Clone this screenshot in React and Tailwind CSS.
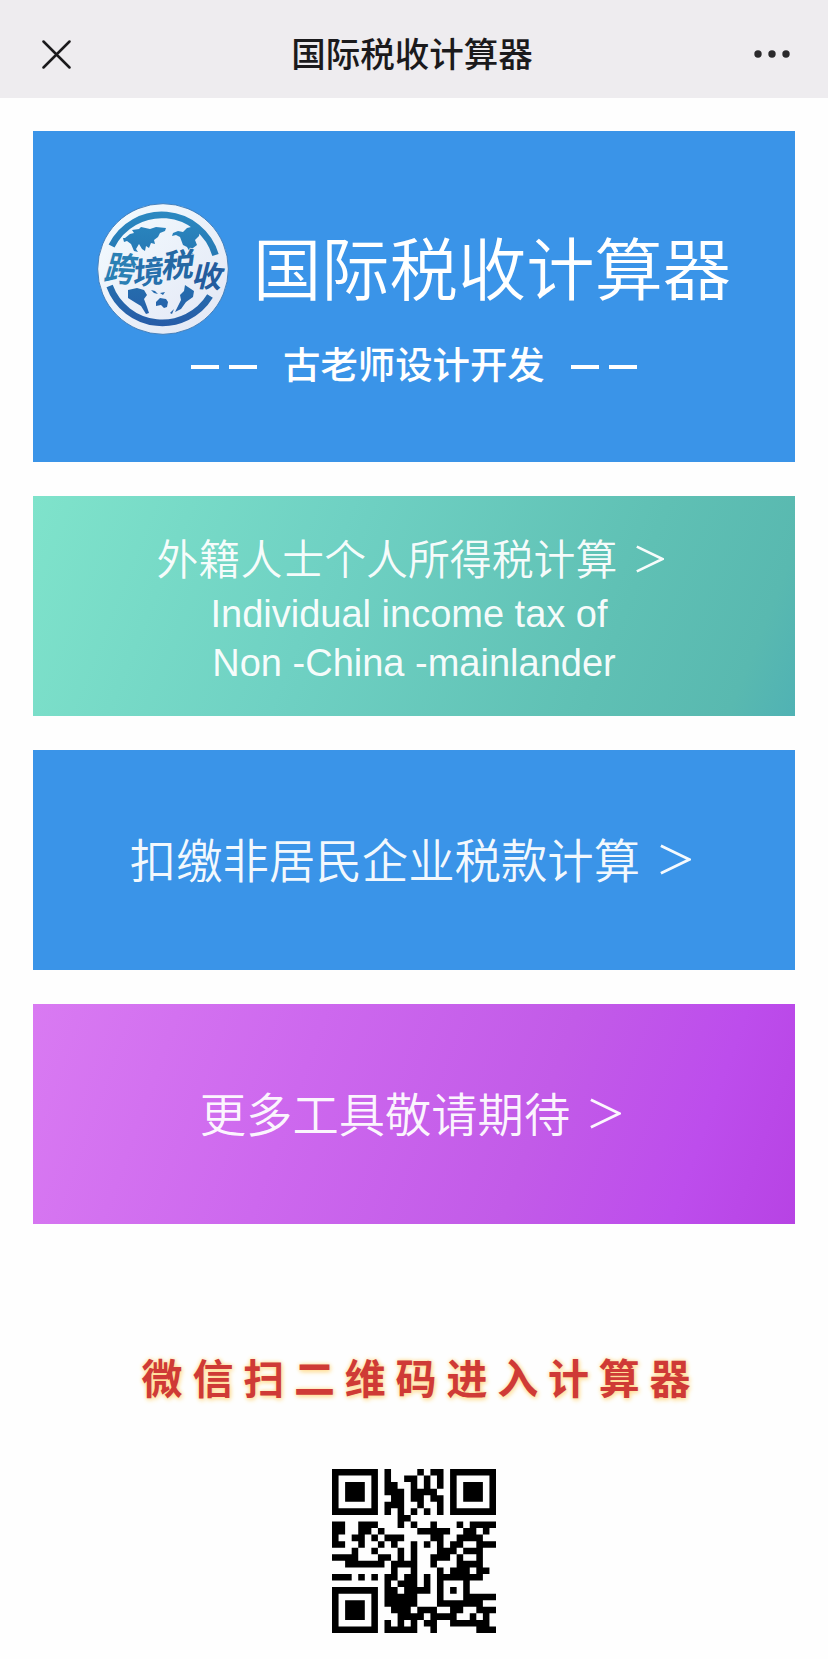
import React from 'react';

const tools = [
  {
    title: '外籍人士个人所得税计算',
    lines: ['Individual income tax of', 'Non -China -mainlander'],
    box: 'bg-linear-[112deg,#7fe3cb_0%,#6fd1c3_38%,#5fc0b4_75%,#59b9b0_92%,#50b2b4_100%] pt-[36px]',
    row: 'h-[58px] pb-[5px] pr-[7px] gap-[19px]',
    text: 'text-[41.9px]',
    arrow: 'w-[28px] h-[28px]',
  },
  {
    title: '扣缴非居民企业税款计算',
    lines: [],
    box: 'bg-[#3a94e8] pt-[78px]',
    row: 'h-[64px] pb-px pr-[7px] gap-[20px]',
    text: 'text-[46.4px]',
    arrow: 'w-[31px] h-[31px]',
  },
  {
    title: '更多工具敬请期待',
    lines: [],
    box: 'bg-linear-[110deg,#d97af2_0%,#cd68ee_35%,#c25be8_65%,#bd4dec_85%,#b743e4_100%] pt-[78px]',
    row: 'h-[64px] pb-px pr-[7px] gap-[20px]',
    text: 'text-[46.3px]',
    arrow: 'w-[31px] h-[31px]',
  },
];

const qrRows = [
  '1111111010000101101111111',
  '1000001010011010101000001',
  '1011101011001010101011101',
  '1011101011101111001011101',
  '1011101001101101101011101',
  '1000001011100100101000001',
  '1111111010101010101111111',
  '0000000000110000000000000',
  '1100111000101001000101111',
  '1100110100000111110011010',
  '1001101011100001100111100',
  '1100100101001010101100111',
  '0001001000101000111011100',
  '1111000110101001110100100',
  '0011111101111001000111100',
  '0000000001001000101110110',
  '1110101011011010111111100',
  '0000000010111010100010000',
  '1111111011011110101010000',
  '1000001011111000100011111',
  '1011101011111000111111100',
  '1011101001110111001100111',
  '1011101000111101111001010',
  '1000001010101011001111110',
  '1111111011111001000000111',
];

// one closed rectangle per run of dark modules
const qrPath = qrRows
  .map((row, y) =>
    [...row.matchAll(/1+/g)].map((m) => `M${m.index} ${y}h${m[0].length}v1h-${m[0].length}z`).join('')
  )
  .join('');

const Arrow = ({ className }) => (
  <svg className={className} viewBox="0 0 28 28" fill="none" stroke="currentColor" strokeWidth="2.6">
    <path d="M0.8 1.6L26.5 14L0.8 26.4" />
  </svg>
);

const Logo = () => (
  <svg className="w-[132px] h-[132px] shrink-0 overflow-visible" viewBox="0 0 132 132">
    <defs>
      <linearGradient id="ink" x1="0" y1="0" x2="0" y2="132" gradientUnits="userSpaceOnUse">
        <stop offset="0" stopColor="#2c8cc4" />
        <stop offset="0.5" stopColor="#2474b0" />
        <stop offset="1" stopColor="#2858a6" />
      </linearGradient>
      <linearGradient id="disc" x1="0" y1="0" x2="1" y2="1">
        <stop offset="0" stopColor="#f4fcff" />
        <stop offset="1" stopColor="#e2e6f4" />
      </linearGradient>
    </defs>
    <circle cx="66" cy="66" r="65.3" fill="url(#disc)" stroke="#3c78b4" strokeWidth="0.9" />
    <g fill="none" stroke="url(#ink)" strokeWidth="6.6">
      <path d="M14.6 43A56 56 0 0 1 118.5 52" />
      <path d="M12.6 83A56 56 0 0 0 113 93" />
    </g>
    <g fill="url(#ink)">
      {/* continents, upper half */}
      <path d="M28 35l5-4 4-1-2-3 7-1 2-2 9 2 6-2 10 1-1 3-5 2-2 4-4 3 1 4-4-1-2 5-3-2-1 5-3-2-3-5-3 5 2 3-4-1-3-7-4-3-3 1-1-4z" />
      <path d="M76 30l5-2 5 1 4-4 8-2 5 4-1 6-4 4 2 5-4 3-1 5 3 2-4-1-4-7-4-2-3-8-4-2-4 1z" />
      {/* continents, lower half */}
      <path d="M31 87l9-2 7 2 3 5-3 4 3 8 2 6-3 1-5-8-5-3-8-5z" />
      <path d="M88 82l9 6-1 6-7 5-5 7-6 3 6-12-1-5 4-4z" />
      <path d="M59 99l4-4 6 1 2 3-1 5-3 1-3-3-5 1z" />
      <path d="M54 87l4 1 3 3-4-1zM63 90l5-1-2 3zM77 106l-2 5-2-1z" />
    </g>
    <g fontFamily='"Noto Sans CJK SC", sans-serif' fontSize="30" fontWeight="700" stroke="#eef4fb" strokeWidth="1" paintOrder="stroke">
      <text fill="#2a80b4" transform="translate(6 77) rotate(4) skewX(-12) scale(1 1.15)">跨</text>
      <text fill="#2670ac" transform="translate(36 82) rotate(-6) skewX(-10) scale(1.02 1.02)">境</text>
      <text fill="#2468a4" transform="translate(64 75) rotate(-4) skewX(-12) scale(1.08 1.08)">税</text>
      <text fill="#245c9e" transform="translate(94 83) rotate(4) skewX(-10) scale(1 1)">收</text>
    </g>
  </svg>
);

const Dashes = () => (
  <div className="flex gap-[10px] mt-[5px]">
    <span className="w-[28px] h-[4px] bg-white"></span>
    <span className="w-[28px] h-[4px] bg-white"></span>
  </div>
);

const QrCode = () => (
  <svg className="w-[164px] h-[164px]" viewBox="0 0 25 25">
    <path d={qrPath} fill="#000" />
  </svg>
);

const App = () => {
  return (
    <div className="w-[828px] h-[1659px] overflow-hidden bg-[#fefefe] font-['Noto_Sans_CJK_SC',sans-serif]">
      <header className="h-[98px] bg-[#eeecef] flex items-center justify-between pt-[10px] pl-[42px] pr-[38px] text-[#1b1a1c]">
        <svg className="w-[29px] h-[29px]" viewBox="0 0 29 29" fill="none" stroke="currentColor" strokeWidth="2.5" strokeLinecap="round">
          <path d="M1.5 1.5L27.5 27.5M27.5 1.5L1.5 27.5" />
        </svg>
        <h1 className="text-[34.5px] font-medium leading-none pb-[4px] pr-px">国际税收计算器</h1>
        <svg className="w-[36px] h-[8px]" viewBox="0 0 36 8" fill="#2b2a2c">
          <circle cx="4" cy="4" r="3.7" />
          <circle cx="18" cy="4" r="3.7" />
          <circle cx="32" cy="4" r="3.7" />
        </svg>
      </header>

      <main className="px-[33px] pt-[33px] flex flex-col">
        <section className="h-[331px] bg-[#3a94e8] text-white pt-[72px]">
          <div className="flex items-center h-[132px] pl-[64px] gap-[24px]">
            <Logo />
            <h2 className="text-[68.3px] font-[350] leading-none whitespace-nowrap pb-[5px]">国际税收计算器</h2>
          </div>
          <div className="flex items-center h-[50px] mt-[4px] pl-[158px] gap-[26px]">
            <Dashes />
            <p className="text-[37.4px] font-medium leading-none pb-px">古老师设计开发</p>
            <Dashes />
          </div>
        </section>

        {/* Tool list */}
        {tools.map((tool) => (
          <section key={tool.title} className={`mt-[34px] h-[220px] text-white/95 ${tool.box}`}>
            <div className={`flex items-center justify-center ${tool.row}`}>
              <span className={`font-[350] leading-none whitespace-nowrap pb-[3px] ${tool.text}`}>{tool.title}</span>
              <Arrow className={tool.arrow} />
            </div>
            {tool.lines.map((line) => (
              <p
                key={line}
                className="text-center text-[38px] leading-[48.5px] whitespace-pre first-of-type:pr-[10px] font-['Liberation_Sans',sans-serif]"
              >
                {line}
              </p>
            ))}
          </section>
        ))}
      </main>

      <div className="flex flex-col items-center pt-[127px]">
        <p className="text-[41px] leading-[50px] tracking-[9.8px] pl-[14px] font-bold text-[#cf3a36] [text-shadow:0_0_4px_#ffd98a,1px_2px_5px_#ffe2a0]">
          微信扫二维码进入计算器
        </p>
        <div className="mt-[68px]">
          <QrCode />
        </div>
      </div>
    </div>
  );
};

export default App;
